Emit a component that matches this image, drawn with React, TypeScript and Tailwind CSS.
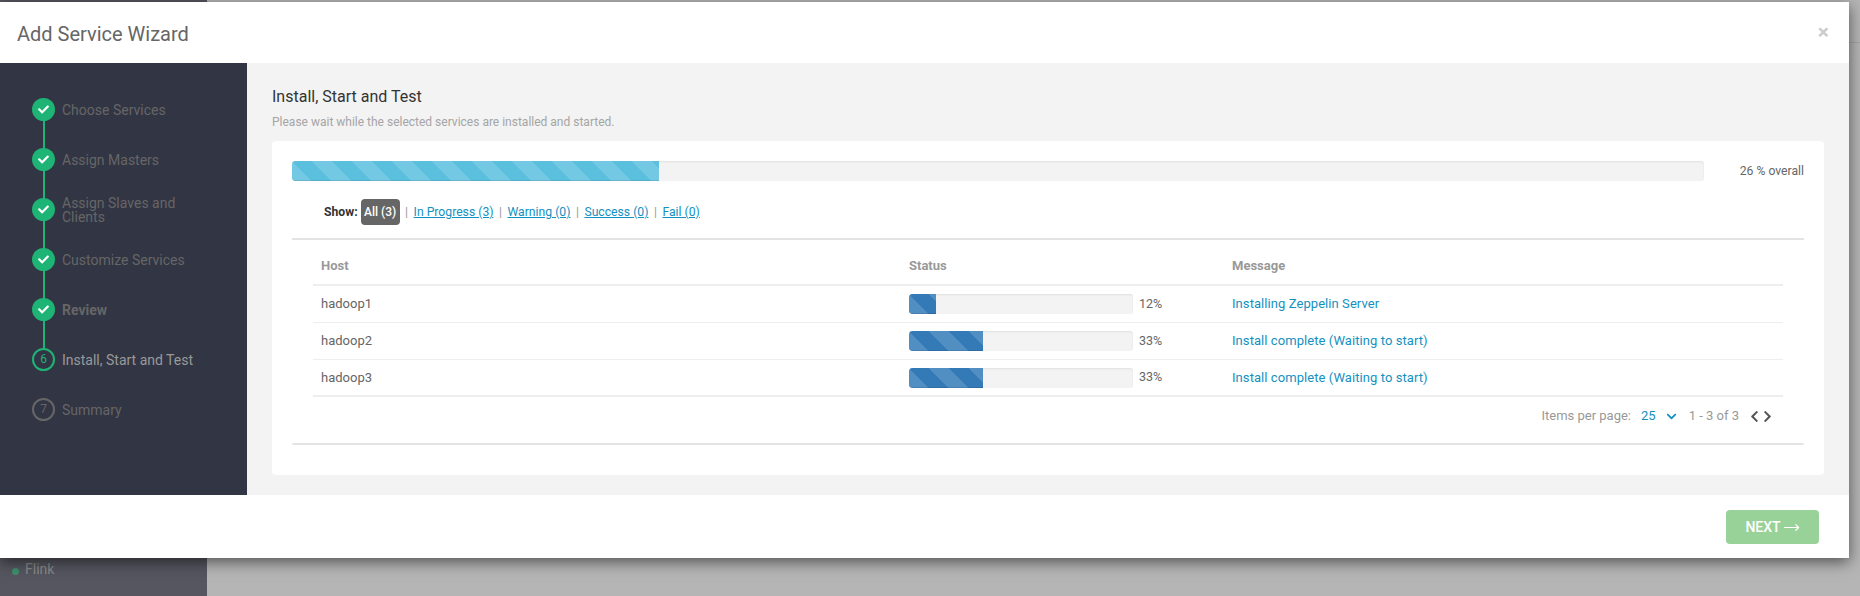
import { MoveRight } from "lucide-react";
import { FaCheck, FaChevronDown, FaChevronLeft, FaChevronRight } from "react-icons/fa";

const steps = [
  { label: ["Choose Services"], state: "done" },
  { label: ["Assign Masters"], state: "done" },
  { label: ["Assign Slaves and", "Clients"], state: "done" },
  { label: ["Customize Services"], state: "done" },
  { label: ["Review"], state: "done", bold: true },
  { label: ["Install, Start and Test"], state: "active", n: 6 },
  { label: ["Summary"], state: "todo", n: 7 },
];

const hosts = [
  { name: "hadoop1", pct: 12, width: 27, msg: "Installing Zeppelin Server" },
  { name: "hadoop2", pct: 33, width: 74, msg: "Install complete (Waiting to start)" },
  { name: "hadoop3", pct: 33, width: 74, msg: "Install complete (Waiting to start)" },
];

const filters = ["In Progress (3)", "Warning (0)", "Success (0)", "Fail (0)"];

function Step({ step, last }: { step: (typeof steps)[number]; last: boolean }) {
  return (
    <div className="relative flex h-[50px] items-center">
      {step.state === "done" ? (
        <div className="z-10 flex h-[23px] w-[23px] shrink-0 items-center justify-center rounded-full bg-[#1eb475]">
          <FaCheck size={11} className="text-white" />
        </div>
      ) : (
        <div
          className={
            step.state === "active"
              ? "z-10 flex h-[23px] w-[23px] shrink-0 items-center justify-center rounded-full border-2 border-[#1eb475] bg-[#323544] text-xs text-[#1eb475]"
              : "z-10 flex h-[23px] w-[23px] shrink-0 items-center justify-center rounded-full border-2 border-[#666] bg-[#323544] text-xs text-[#666]"
          }
        >
          {step.n}
        </div>
      )}
      {!last && step.state === "done" && (
        <div className="absolute left-[11px] top-[25px] h-[50px] w-[2px] bg-[#1eb475]" />
      )}
      <div
        className={
          (step.state === "active" ? "text-[#999] " : "text-[#666] ") +
          (step.bold ? "font-bold " : "") +
          "ml-[7px] mt-[1px] text-[14px] leading-[14px]"
        }
      >
        {step.label.map((l) => (
          <div key={l}>{l}</div>
        ))}
      </div>
    </div>
  );
}

function Bar({ width, color }: { width: number; color: string }) {
  return (
    <div
      className="h-full rounded-l-[3px] border-b border-black/10"
      style={{
        width,
        backgroundColor: color,
        backgroundImage:
          "linear-gradient(45deg, transparent 25%, rgba(255,255,255,.15) 25%, rgba(255,255,255,.15) 50%, transparent 50%, transparent 75%, rgba(255,255,255,.15) 75%)",
        backgroundSize: "40px 40px",
      }}
    />
  );
}

export default function App() {
  return (
    <div className="relative h-[596px] w-[1860px] overflow-hidden bg-[#b5b5b5] font-['Roboto',sans-serif]">
      <div className="absolute left-0 top-0 h-full w-[207px] bg-[#55565f]">
        <div className="absolute left-[12px] top-[568px] h-[7px] w-[7px] rounded-full bg-[#3f8f6c]" />
        <div className="absolute left-[25px] top-[559px] text-[14px] text-[#8a8a8a]">Flink</div>
      </div>
      <div className="absolute left-[1849px] top-[42px] h-px w-[11px] bg-[#a5a5a5]" />

      <div className="absolute left-0 top-[2px] flex h-[556px] w-[1849px] flex-col bg-white shadow-[0_4px_14px_rgba(0,0,0,0.55)]">
        <div className="flex h-[61px] shrink-0 items-center justify-between pl-[17px] pr-[20px]">
          <div className="mt-[2px] text-[20px] text-[#666]">Add Service Wizard</div>
          <span className="-mt-[1px] text-[21px] font-bold leading-none text-[#ccc]">×</span>
        </div>

        <div className="flex h-[432px] shrink-0">
          <div className="w-[247px] shrink-0 bg-[#323544] pl-[32px] pt-[21px]">
            {steps.map((s, i) => (
              <Step key={i} step={s} last={i === steps.length - 1} />
            ))}
          </div>

          <div className="flex-1 bg-[#f3f3f3] pl-[25px] pr-[25px]">
            <div className="mt-[24px] text-[16px] leading-[20px] text-[#333]">Install, Start and Test</div>
            <div className="mt-[8px] text-[12px] leading-[14px] text-[#a5a5a5]">
              Please wait while the selected services are installed and started.
            </div>

            <div className="mt-[12px] h-[334px] rounded-[4px] bg-white px-[20px] pt-[20px]">
              <div className="flex items-center">
                <div className="h-[20px] w-[1412px] overflow-hidden rounded-[3px] bg-[#f3f3f3] shadow-[inset_0_1px_2px_rgba(0,0,0,0.08)]">
                  <Bar width={367} color="#5bc0de" />
                </div>
                <div className="ml-auto text-[12.2px] text-[#666]">26 % overall</div>
              </div>

              <div className="mt-[18px] flex h-[26px] items-center pl-[32px] text-[12.2px]">
                <span className="font-bold text-[#333]">Show:</span>
                <span className="ml-[3px] flex h-[26px] w-[39px] items-center justify-center rounded-[4px] bg-[#666] text-[12px] font-medium text-white">
                  All (3)
                </span>
                {filters.map((f) => (
                  <span key={f} className="flex items-center">
                    <span className="mx-[5.5px] text-[#999]">|</span>
                    <a className="text-[#1491c1] underline">{f}</a>
                  </span>
                ))}
              </div>

              <div className="mt-[13px] h-[2px] bg-[#e3e3e3]" />

              <div className="mx-[21px] text-[13px]">
                <div className="grid h-[46px] grid-cols-[588px_323px_1fr] items-center border-b-2 border-[#eee] pl-[8px] pt-[8px] font-bold text-[#999]">
                  <div>Host</div>
                  <div>Status</div>
                  <div>Message</div>
                </div>
                {hosts.map((h, i) => (
                  <div
                    key={h.name}
                    className={
                      (i === hosts.length - 1 ? "border-b-2 border-[#eee] " : "border-b border-[#eee] ") +
                      "grid h-[37px] grid-cols-[588px_323px_1fr] items-center pl-[8px] text-[#666]"
                    }
                  >
                    <div>{h.name}</div>
                    <div className="flex items-center">
                      <div className="h-[20px] w-[224px] overflow-hidden rounded-[3px] bg-[#f3f3f3] shadow-[inset_0_1px_2px_rgba(0,0,0,0.08)]">
                        <Bar width={h.width} color="#337ab7" />
                      </div>
                      <span className="ml-[6px] text-[12.5px]">{h.pct}%</span>
                    </div>
                    <div className="tracking-[0.07px] text-[#1491c1]">{h.msg}</div>
                  </div>
                ))}
              </div>

              <div className="mx-[21px] flex h-[38px] items-center justify-end pr-[9px] text-[13px] text-[#999]">
                <span>Items per page:</span>
                <span className="ml-[10px] text-[#1491c1]">25</span>
                <FaChevronDown size={11} className="ml-[10px] text-[#1491c1]" />
                <span className="ml-[12px]">1 - 3 of 3</span>
                <FaChevronLeft size={13} className="ml-[9px] text-[#555]" />
                <FaChevronRight size={13} className="text-[#555]" />
              </div>
              <div className="mt-[8px] h-[2px] rounded-b-[4px] bg-[#e3e3e3]" />
            </div>
          </div>
        </div>

        <div className="flex flex-1 items-start justify-end pr-[30px] pt-[15px]">
          <button className="flex h-[34px] w-[93px] items-center justify-center rounded-[4px] bg-[#98d298] text-[14px] font-medium text-white">
            NEXT
            <MoveRight size={17} strokeWidth={1.75} className="ml-[2px]" />
          </button>
        </div>
      </div>
    </div>
  );
}
